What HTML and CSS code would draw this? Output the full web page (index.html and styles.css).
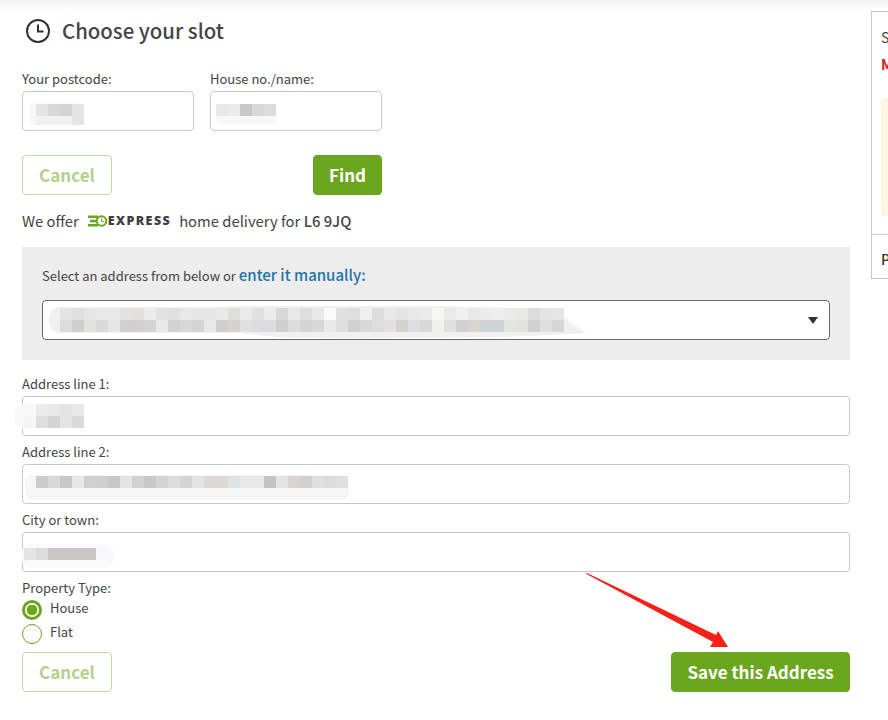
FILE: index.html
```html
<!DOCTYPE html>
<html lang="en">
<head>
<meta charset="utf-8">
<title>Choose your slot</title>
<link rel="stylesheet" href="styles.css">
</head>
<body>
<div class="shell">
  <main class="main">
    <h1 class="title">
      <svg class="clock" viewBox="0 0 26 26" width="26" height="26"><circle cx="13" cy="13" r="11" fill="none" stroke="#333" stroke-width="2"/><path d="M13 6.5V13.5H18.5" fill="none" stroke="#333" stroke-width="2"/></svg>
      <span class="title-text">Choose your slot</span>
    </h1>

    <div class="lookup">
      <div class="field">
        <label class="label">Your postcode:</label>
        <div class="input">
          <svg class="mask" width="172" height="40"><rect x="8" y="12" width="54" height="22" rx="5" fill="#f7f7f7"/><g fill="#e4e4e4"><rect x="14" y="13" width="12" height="12"/><rect x="50" y="13" width="12" height="12"/><rect x="50" y="25" width="12" height="9"/></g><rect x="26" y="13" width="12" height="12" fill="#d8d8d8"/><rect x="38" y="13" width="12" height="12" fill="#d4d4d4"/><rect x="14" y="25" width="36" height="9" fill="#f1f1f1"/></svg>
        </div>
      </div>
      <div class="field">
        <label class="label">House no./name:</label>
        <div class="input">
          <svg class="mask" width="172" height="40"><rect x="6" y="13" width="60" height="20" rx="4" fill="#f7f7f7"/><rect x="6" y="13" width="12" height="12" fill="#e8e8e8"/><rect x="18" y="13" width="12" height="12" fill="#ececec"/><rect x="30" y="13" width="12" height="12" fill="#c8c8c8"/><rect x="42" y="13" width="12" height="12" fill="#d8d8d8"/><rect x="54" y="13" width="12" height="12" fill="#dcdcdc"/></svg>
        </div>
      </div>
    </div>

    <div class="lookup-actions">
      <button class="btn btn-ghost" type="button">Cancel</button>
      <button class="btn btn-solid" type="button">Find</button>
    </div>

    <p class="offer">
      <span>We offer</span>
      <span class="express">
        <svg viewBox="0 0 20 12" width="20" height="12"><g fill="#6aa61e"><rect x="0" y="0.5" width="10" height="2.5"/><rect x="2" y="4.8" width="7" height="2.5"/><rect x="0" y="9" width="10" height="2.5"/></g><circle cx="13.5" cy="6" r="4.8" fill="#fff" stroke="#6aa61e" stroke-width="2"/><path d="M13.5 3.5V6.4H16" fill="none" stroke="#6aa61e" stroke-width="1"/></svg>
        <b class="express-word">EXPRESS</b>
      </span>
      <span>home delivery for <strong class="code">L6 9JQ</strong></span>
    </p>

    <section class="picker">
      <p class="picker-text">Select an address from below or <a class="manual" href="#">enter it manually:</a></p>
      <div class="select">
        <svg class="mask" width="788" height="40">
          <path d="M17 7H170Q200 5 250 6H380Q450 7 510 9L544 33Q470 39 250 38Q220 36 200 33H17Q7 32 7 20Q7 8 17 7Z" fill="#f0f0f0"/>
          <g>
            <rect x="18" y="8" width="12" height="12" fill="#e4e4e4"/><rect x="30" y="8" width="12" height="12" fill="#e0e0e0"/><rect x="42" y="8" width="12" height="12" fill="#e6e6e6"/><rect x="54" y="8" width="12" height="12" fill="#e8e8e8"/><rect x="66" y="8" width="12" height="12" fill="#e8e8e8"/><rect x="78" y="8" width="12" height="12" fill="#e2e2e2"/><rect x="90" y="8" width="12" height="12" fill="#e4e0de"/><rect x="102" y="8" width="12" height="12" fill="#ececec"/><rect x="114" y="8" width="12" height="12" fill="#e2e2e2"/><rect x="126" y="8" width="12" height="12" fill="#e0e0e0"/><rect x="138" y="8" width="12" height="12" fill="#e6e8ea"/><rect x="150" y="8" width="12" height="12" fill="#e6e6e6"/><rect x="162" y="8" width="12" height="12" fill="#e6e6e6"/><rect x="174" y="8" width="12" height="12" fill="#e8e8e8"/><rect x="186" y="8" width="12" height="12" fill="#e0dcd8"/><rect x="198" y="8" width="12" height="12" fill="#eaeae6"/><rect x="210" y="8" width="12" height="12" fill="#e0e0e2"/><rect x="222" y="8" width="12" height="12" fill="#ececec"/><rect x="234" y="8" width="12" height="12" fill="#d8d8da"/><rect x="246" y="8" width="12" height="12" fill="#e8e8e8"/><rect x="258" y="8" width="12" height="12" fill="#dedede"/><rect x="270" y="8" width="12" height="12" fill="#e8e8e8"/><rect x="282" y="8" width="12" height="12" fill="#fafafa"/><rect x="294" y="8" width="12" height="12" fill="#e0e0e0"/><rect x="306" y="8" width="12" height="12" fill="#e0dedc"/><rect x="318" y="8" width="12" height="12" fill="#f0f0f2"/><rect x="330" y="8" width="12" height="12" fill="#dcdcdc"/><rect x="342" y="8" width="12" height="12" fill="#e8e8e8"/><rect x="354" y="8" width="12" height="12" fill="#e4e4e4"/><rect x="366" y="8" width="12" height="12" fill="#e8e8e8"/><rect x="378" y="8" width="12" height="12" fill="#eaeaea"/><rect x="390" y="8" width="12" height="12" fill="#f6f6f2"/><rect x="402" y="8" width="12" height="12" fill="#eaeaea"/><rect x="414" y="8" width="12" height="12" fill="#efefef"/><rect x="426" y="8" width="12" height="12" fill="#e8e8e8"/><rect x="438" y="8" width="12" height="12" fill="#ececec"/><rect x="450" y="8" width="12" height="12" fill="#eeeeee"/><rect x="462" y="8" width="12" height="12" fill="#eaeaea"/><rect x="474" y="8" width="12" height="12" fill="#e8e8e4"/><rect x="486" y="8" width="12" height="12" fill="#dcdcdc"/><rect x="498" y="8" width="12" height="12" fill="#e4e4e4"/><rect x="510" y="8" width="12" height="12" fill="#e6e6e6"/>
            <rect x="18" y="20" width="12" height="12" fill="#dcdcdc"/><rect x="30" y="20" width="12" height="12" fill="#cfcfd0"/><rect x="42" y="20" width="12" height="12" fill="#e4e2de"/><rect x="54" y="20" width="12" height="12" fill="#d8dadc"/><rect x="66" y="20" width="12" height="12" fill="#e6e6e6"/><rect x="78" y="20" width="12" height="12" fill="#d0d0d0"/><rect x="90" y="20" width="12" height="12" fill="#d4d0d0"/><rect x="102" y="20" width="12" height="12" fill="#d4d4d4"/><rect x="114" y="20" width="12" height="12" fill="#e8eaea"/><rect x="126" y="20" width="12" height="12" fill="#d4d2d0"/><rect x="138" y="20" width="12" height="12" fill="#d8d8d8"/><rect x="150" y="20" width="12" height="12" fill="#d6d4d0"/><rect x="162" y="20" width="12" height="12" fill="#e6e8ea"/><rect x="174" y="20" width="12" height="12" fill="#d2cece"/><rect x="186" y="20" width="12" height="12" fill="#d6d2d0"/><rect x="198" y="20" width="12" height="12" fill="#e0e0e0"/><rect x="210" y="20" width="12" height="12" fill="#dcdcde"/><rect x="222" y="20" width="12" height="12" fill="#dcdcde"/><rect x="234" y="20" width="12" height="12" fill="#cfcfcf"/><rect x="246" y="20" width="12" height="12" fill="#dcdcde"/><rect x="258" y="20" width="12" height="12" fill="#d4d4d4"/><rect x="270" y="20" width="12" height="12" fill="#d8d8d8"/><rect x="282" y="20" width="12" height="12" fill="#e8eaea"/><rect x="294" y="20" width="12" height="12" fill="#dedede"/><rect x="306" y="20" width="12" height="12" fill="#d0d0d0"/><rect x="318" y="20" width="12" height="12" fill="#d8d8d8"/><rect x="330" y="20" width="12" height="12" fill="#dcdede"/><rect x="342" y="20" width="12" height="12" fill="#e2e0e0"/><rect x="354" y="20" width="12" height="12" fill="#d4d2d2"/><rect x="366" y="20" width="12" height="12" fill="#dcdee2"/><rect x="378" y="20" width="12" height="12" fill="#d8d8d8"/><rect x="390" y="20" width="12" height="12" fill="#f0f0ec"/><rect x="402" y="20" width="12" height="12" fill="#e0e0e0"/><rect x="414" y="20" width="12" height="12" fill="#d2d0d0"/><rect x="426" y="20" width="12" height="12" fill="#d8d4d0"/><rect x="438" y="20" width="12" height="12" fill="#cfd4d8"/><rect x="450" y="20" width="12" height="12" fill="#cfd4d6"/><rect x="462" y="20" width="12" height="12" fill="#e2e4e4"/><rect x="474" y="20" width="12" height="12" fill="#e4e2de"/><rect x="486" y="20" width="12" height="12" fill="#d0d0d0"/><rect x="498" y="20" width="12" height="12" fill="#dedede"/><rect x="510" y="20" width="12" height="12" fill="#d6d6d6"/>
          </g>
        </svg>
        <span class="caret"></span>
      </div>
    </section>

    <div class="field field-wide">
      <label class="label">Address line 1:</label>
      <div class="input">
        <svg class="mask" width="828" height="40"><rect x="-8" y="8" width="30" height="25" rx="10" fill="#faf8f8"/><rect x="14" y="8" width="12" height="12" fill="#ececec"/><rect x="26" y="8" width="12" height="12" fill="#e8e8e8"/><rect x="38" y="8" width="12" height="12" fill="#e4e4e4"/><rect x="50" y="8" width="12" height="12" fill="#e8e8e8"/><rect x="2" y="20" width="12" height="12" fill="#f6f4f4"/><rect x="14" y="20" width="12" height="12" fill="#dedede"/><rect x="26" y="20" width="12" height="12" fill="#d4d4d4"/><rect x="38" y="20" width="12" height="12" fill="#e4e4e4"/><rect x="50" y="20" width="12" height="12" fill="#dadada"/></svg>
      </div>
    </div>
    <div class="field field-wide">
      <label class="label">Address line 2:</label>
      <div class="input">
        <svg class="mask" width="828" height="40"><rect x="3" y="11" width="324" height="25" rx="8" fill="#f6f6f6"/><rect x="14" y="12" width="12" height="12" fill="#cccccc"/><rect x="26" y="12" width="12" height="12" fill="#d8d8d8"/><rect x="38" y="12" width="12" height="12" fill="#c8c8c8"/><rect x="50" y="12" width="12" height="12" fill="#e8e8e2"/><rect x="62" y="12" width="12" height="12" fill="#cfd0d2"/><rect x="74" y="12" width="12" height="12" fill="#d0cece"/><rect x="86" y="12" width="12" height="12" fill="#c8c8c8"/><rect x="98" y="12" width="12" height="12" fill="#e4e4e4"/><rect x="110" y="12" width="12" height="12" fill="#d2d2d2"/><rect x="122" y="12" width="12" height="12" fill="#c8c8c8"/><rect x="134" y="12" width="12" height="12" fill="#d4d4d4"/><rect x="146" y="12" width="12" height="12" fill="#dcdcdc"/><rect x="158" y="12" width="12" height="12" fill="#d4d4d4"/><rect x="170" y="12" width="12" height="12" fill="#e4e4e4"/><rect x="182" y="12" width="12" height="12" fill="#dcd8d8"/><rect x="194" y="12" width="12" height="12" fill="#dcd8d8"/><rect x="206" y="12" width="12" height="12" fill="#dde4e8"/><rect x="218" y="12" width="12" height="12" fill="#e8e8e8"/><rect x="230" y="12" width="12" height="12" fill="#e8e8e8"/><rect x="242" y="12" width="12" height="12" fill="#c4c4c4"/><rect x="254" y="12" width="12" height="12" fill="#e4e4e4"/><rect x="266" y="12" width="12" height="12" fill="#d8d4d4"/><rect x="278" y="12" width="12" height="12" fill="#d4d0d0"/><rect x="290" y="12" width="12" height="12" fill="#dce0e2"/><rect x="302" y="12" width="12" height="12" fill="#dcdcdc"/><rect x="314" y="12" width="12" height="12" fill="#e0e0e0"/></svg>
      </div>
    </div>
    <div class="field field-wide">
      <label class="label">City or town:</label>
      <div class="input">
        <svg class="mask" width="828" height="40"><rect x="0" y="12" width="92" height="24" rx="8" fill="#fafafc"/><rect x="2" y="16" width="12" height="12" fill="#e8e4e4"/><rect x="14" y="16" width="12" height="12" fill="#dcdcdc"/><rect x="26" y="16" width="48" height="12" fill="#c8c7c6"/><rect x="74" y="16" width="12" height="12" fill="#f6f8fc"/></svg>
      </div>
    </div>

    <div class="property">
      <div class="label">Property Type:</div>
      <div class="radio-row"><span class="radio radio-on"></span><span class="radio-text">House</span></div>
      <div class="radio-row"><span class="radio"></span><span class="radio-text">Flat</span></div>
    </div>

    <div class="form-actions">
      <button class="btn btn-ghost" type="button">Cancel</button>
      <button class="btn btn-solid btn-save" type="button">Save this Address</button>
    </div>
  </main>

  <aside class="summary">
    <div class="summary-top">
      <div class="summary-line">S</div>
      <div class="summary-line summary-red">M</div>
      <div class="summary-note"></div>
    </div>
    <div class="summary-foot">P</div>
  </aside>
</div>

<svg class="annotation" width="150" height="80" viewBox="0 0 150 80"><path d="M0 0.8L1 0L130 62L132 58L142 74L124 74L127 69Z" fill="#f7211a"/></svg>
</body>
</html>
```

FILE: styles.css
```css
* { box-sizing: border-box; }

html, body { height: 100%; }

body {
  margin: 0;
  overflow: hidden;
  position: relative;
  background: linear-gradient(#f0f0f0, #ffffff 10px);
  color: #3c3c3c;
  font-family: "Noto Sans CJK SC", "Noto Sans", sans-serif;
  font-size: 13px;
  line-height: 20px;
}

.shell {
  display: flex;
  align-items: flex-start;
  gap: 21px;
  padding: 17px 0 0 22px;
}

.main { width: 828px; flex: none; }

.title {
  display: flex;
  align-items: center;
  gap: 11px;
  height: 28px;
  margin: 0 0 24px 3px;
  font-size: 20.4px;
  font-weight: 500;
  line-height: 26px;
  color: #444;
}

.title-text { margin-top: -2px; }

.clock { flex: none; }

.lookup {
  display: grid;
  grid-template-columns: 172px 172px;
  gap: 16px;
  width: 360px;
}

.label {
  display: block;
  height: 20px;
  line-height: 20px;
  margin-bottom: 2px;
  font-size: 13px;
  color: #444;
}

.input, .select {
  position: relative;
  height: 40px;
  background: #fff;
  border-radius: 4px;
}

.input { border: 1px solid #c8c8c8; }

.mask {
  position: absolute;
  left: -1px;
  top: -1px;
  overflow: visible;
}

.lookup-actions {
  display: flex;
  justify-content: space-between;
  width: 360px;
  margin-top: 24px;
}

.btn {
  height: 40px;
  padding: 0;
  border-radius: 4px;
  font-family: inherit;
  font-size: 17px;
  font-weight: 700;
  line-height: 38px;
}

.btn-ghost {
  width: 90px;
  background: #fff;
  border: 1px solid #c3d9a5;
  color: #b3d08c;
}

.btn-solid {
  width: 69px;
  background: #6aa61e;
  border: 1px solid #6aa61e;
  color: #fff;
}

.btn-save { width: 179px; }

.offer {
  display: flex;
  align-items: center;
  height: 24px;
  margin: 14px 0;
  font-size: 14.8px;
  line-height: 24px;
  color: #444;
}

.express {
  display: flex;
  align-items: center;
  margin: 0 8px 0 9px;
}

.express-word {
  font-family: "Open Sans", sans-serif;
  font-size: 12.5px;
  font-weight: 800;
  letter-spacing: 1.4px;
  color: #3f3f3f;
}

.code { font-weight: 500; }

.picker {
  height: 113px;
  padding: 18px 20px 0;
  margin-bottom: 14px;
  background: #ededed;
}

.picker-text {
  height: 20px;
  margin: 0 0 15px;
  font-size: 13px;
  line-height: 20px;
  color: #444;
}

.manual {
  font-size: 15px;
  font-weight: 500;
  color: #1f74a8;
  text-decoration: none;
}

.select { border: 1px solid #666; }

.caret {
  position: absolute;
  right: 11px;
  top: 16px;
  border-left: 5px solid transparent;
  border-right: 5px solid transparent;
  border-top: 7px solid #333;
}

.field-wide { margin-bottom: 6px; }

.property .label { margin-bottom: 1px; }

.radio-row {
  display: flex;
  align-items: center;
  gap: 8px;
  height: 22px;
  margin-bottom: 2px;
}

.radio {
  flex: none;
  width: 20px;
  height: 20px;
  border: 1px solid #6aa61e;
  border-radius: 50%;
  background: #fff;
}

.radio-on {
  border-width: 3px;
  background: radial-gradient(circle, #6aa61e 0 5px, #fff 5.6px);
}

.radio-text {
  position: relative;
  top: -2px;
  color: #444;
}

.form-actions {
  display: flex;
  justify-content: space-between;
  margin-top: 7px;
}

.summary {
  flex: none;
  width: 17px;
  height: 268px;
  margin-top: -6px;
  overflow: hidden;
  border: 1px solid #c8c8c8;
  border-right: 0;
  background: #fff;
}

.summary-top {
  height: 223px;
  padding: 15px 0 0 9px;
  border-bottom: 1px solid #c8c8c8;
}

.summary-line {
  height: 20px;
  margin-bottom: 7px;
  font-size: 14px;
  color: #444;
}

.summary-red { font-weight: 700; color: #c8232c; }

.summary-note {
  height: 118px;
  margin-top: 24px;
  background: #fdf5e0;
  border-radius: 3px 0 0 3px;
}

.summary-foot {
  padding: 14px 0 0 9px;
  font-size: 14px;
  font-weight: 500;
  color: #333;
}

.annotation {
  position: absolute;
  left: 586px;
  top: 573px;
}
```
